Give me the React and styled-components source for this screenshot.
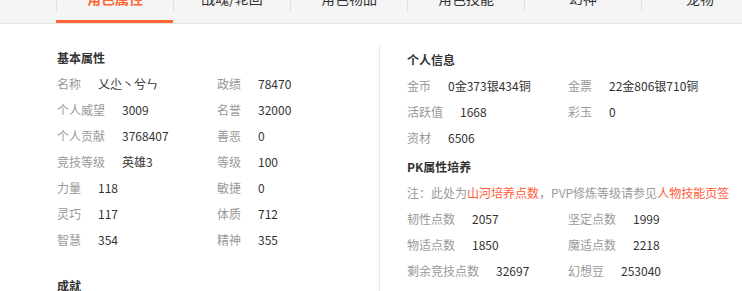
import styled, { createGlobalStyle } from 'styled-components'

const GlobalStyle = createGlobalStyle`
  html, body {
    margin: 0;
    padding: 0;
    background: #fff;
    overflow: hidden;
  }
  body {
    font-family: "Microsoft YaHei", "Noto Sans CJK SC", "Noto Sans", sans-serif;
    color: #333;
  }
`

// 顶部页签
const TabBar = styled.div`
  display: flex;
  margin-top: -27px;
  padding-left: 56px;
  background: #f5f5f5;
  border-bottom: 1px solid #e5e5e5;
  white-space: nowrap;
`
const Tab = styled.div`
  flex: 0 0 117px;
  height: 50px;
  box-sizing: border-box;
  display: flex;
  align-items: flex-start;
  border-bottom: 3px solid ${props => (props.active ? '#ff6633' : 'transparent')};
`
const TabLabel = styled.span`
  flex: 1;
  margin-top: 12px;
  line-height: 26px;
  text-align: center;
  font-size: 14px;
  border-left: 1px solid #e0e0e0;
  color: ${props => (props.active ? '#ff6633' : '#333')};
  font-weight: ${props => (props.active ? 'bold' : 'normal')};
`

const Content = styled.div`
  display: flex;
  padding: 20px 0 0 57px;
`
const LeftPanel = styled.div`
  width: 322px;
`
const RightPanel = styled.div`
  flex: 1;
  margin-top: 2px;
  padding-left: 27px;
  border-left: 1px solid #e8e8e8;
  min-height: 260px;
`
const Heading = styled.div`
  font-size: 12px;
  font-weight: bold;
  color: #333;
  line-height: 27px;
  margin-top: ${props => props.gap || 0}px;
`
const Grid = styled.div`
  display: grid;
  grid-template-columns: ${props => props.col}px ${props => props.col}px;
`
const Cell = styled.div`
  display: flex;
  font-size: 12px;
  line-height: 26px;
  white-space: nowrap;
`
const Label = styled.span`
  color: #999;
`
const Value = styled.span`
  color: #333;
  margin-left: 17px;
`
const Note = styled.div`
  font-size: 12px;
  line-height: 26px;
  color: #999;
  white-space: nowrap;
`
const Highlight = styled.span`
  color: #ff5a36;
`

const tabs = ['角色属性', '战魂/轮回', '角色物品', '角色技能', '幻神', '宠物']

const basic = [
  ['名称', '乂尐丶兮ㄣ'], ['政绩', '78470'],
  ['个人威望', '3009'], ['名誉', '32000'],
  ['个人贡献', '3768407'], ['善恶', '0'],
  ['竞技等级', '英雄3'], ['等级', '100'],
  ['力量', '118'], ['敏捷', '0'],
  ['灵巧', '117'], ['体质', '712'],
  ['智慧', '354'], ['精神', '355'],
]

const personal = [
  ['金币', '0金373银434铜'], ['金票', '22金806银710铜'],
  ['活跃值', '1668'], ['彩玉', '0'],
  ['资材', '6506'],
]

const pk = [
  ['韧性点数', '2057'], ['坚定点数', '1999'],
  ['物适点数', '1850'], ['魔适点数', '2218'],
  ['剩余竞技点数', '32697'], ['幻想豆', '253040'],
]

function Items({ list, col }) {
  return (
    <Grid col={col}>
      {list.map(([k, v]) => (
        <Cell key={k}>
          <Label>{k}</Label>
          <Value>{v}</Value>
        </Cell>
      ))}
    </Grid>
  )
}

export default function App() {
  return (
    <>
      <GlobalStyle />
      <TabBar>
        {tabs.map((t, i) => (
          <Tab key={t} active={i === 0}>
            <TabLabel active={i === 0}>{t}</TabLabel>
          </Tab>
        ))}
      </TabBar>

      <Content>
        <LeftPanel>
          <Heading>基本属性</Heading>
          <Items list={basic} col={160} />
          <Heading gap={19}>成就</Heading>
        </LeftPanel>

        <RightPanel>
          <Heading>个人信息</Heading>
          <Items list={personal} col={161} />
          <Heading gap={2}>PK属性培养</Heading>
          <Note>
            注：此处为<Highlight>山河培养点数</Highlight>，PVP修炼等级请参见<Highlight>人物技能页签</Highlight>
          </Note>
          <Items list={pk} col={161} />
        </RightPanel>
      </Content>
    </>
  )
}
